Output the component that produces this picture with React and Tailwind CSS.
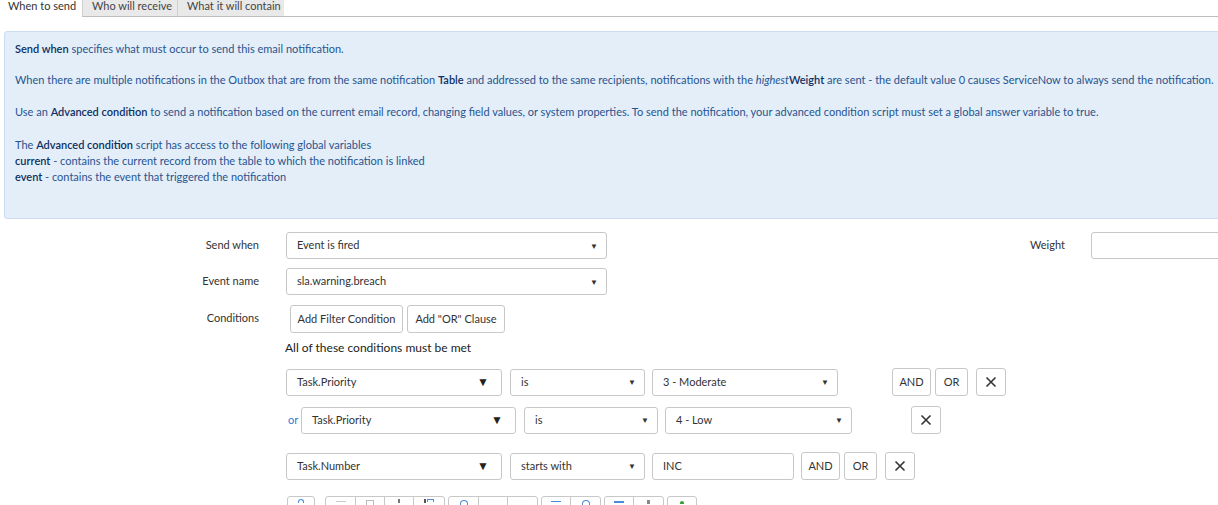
import React from "react";

const font = { fontFamily: '"Source Sans Pro", Lato, "Liberation Sans", sans-serif' };

function Select({ value, className = "", bigArrow = false }) {
  return (
    <div className={`shrink-0 h-[27px] border border-[#c8c8c8] rounded-[3px] bg-white flex items-center justify-between pl-[10px] pr-[8px] text-[11px] text-[#333] ${className}`}>
      <span>{value}</span>
      {bigArrow ? (
        <span className="text-[12px] text-[#222] mr-[4px]">▼</span>
      ) : (
        <span className="text-[8px] text-[#333]">▼</span>
      )}
    </div>
  );
}

function Btn({ children, className = "" }) {
  return (
    <div className={`shrink-0 h-[28px] border border-[#c8c8c8] rounded-[3px] bg-white flex items-center justify-center text-[11px] text-[#333] ${className}`}>
      {children}
    </div>
  );
}

function XBtn({ className = "" }) {
  return (
    <Btn className={`w-[30px] ${className}`}>
      <svg width="12" height="12" viewBox="0 0 12 12">
        <path d="M1.5 1.5 L10.5 10.5 M10.5 1.5 L1.5 10.5" stroke="#333" strokeWidth="1.6" />
      </svg>
    </Btn>
  );
}

export default function App() {
  return (
    <div className="w-[1218px] h-[505px] overflow-hidden bg-white relative" style={font}>
      {/* Tabs */}
      <div className="flex h-[17px] text-[11px] leading-[11px]">
        <div className="w-[82px] pl-[8px] text-[#333] bg-white">When to send</div>
        <div className="w-[95px] pl-[9px] text-[#444] bg-[#e9e9e9] border-l border-[#d0d0d0] border-b border-b-[#bdbdbd]">Who will receive</div>
        <div className="w-[107px] pl-[9px] text-[#444] bg-[#e9e9e9] border-l border-[#d0d0d0] border-b border-b-[#bdbdbd]">What it will contain</div>
        <div className="flex-1 border-b border-[#bdbdbd]"></div>
      </div>

      {/* Info box */}
      <div className="mt-[14px] ml-[4px] w-[1230px] h-[188px] bg-[#e3eef9] border border-[#cbdcef] rounded-[3px] pl-[10px] pt-[9px] text-[11px] leading-[16px] text-[#28548f] whitespace-nowrap">
        <p><b className="font-semibold text-[#0f2f62]">Send when</b> specifies what must occur to send this email notification.</p>
        <p className="mt-[15px]">When there are multiple notifications in the Outbox that are from the same notification <b className="font-semibold text-[#0f2f62]">Table</b> and addressed to the same recipients, notifications with the <i>highest</i><b className="font-semibold text-[#0f2f62]">Weight</b> are sent - the default value 0 causes ServiceNow to always send the notification.</p>
        <p className="mt-[16px]">Use an <b className="font-semibold text-[#0f2f62]">Advanced condition</b> to send a notification based on the current email record, changing field values, or system properties. To send the notification, your advanced condition script must set a global answer variable to true.</p>
        <p className="mt-[17px]">The <b className="font-semibold text-[#0f2f62]">Advanced condition</b> script has access to the following global variables</p>
        <p><b className="font-semibold text-[#0f2f62]">current</b> - contains the current record from the table to which the notification is linked</p>
        <p><b className="font-semibold text-[#0f2f62]">event</b> - contains the event that triggered the notification</p>
      </div>

      {/* Form */}
      <div className="mt-[13px] text-[11px] text-[#333]">
        <div className="flex items-center h-[27px] w-[1400px]">
          <div className="shrink-0 w-[259px] text-right">Send when</div>
          <Select value="Event is fired" className="ml-[27px] w-[321px]" />
          <div className="shrink-0 w-[458px] text-right">Weight</div>
          <div className="shrink-0 ml-[26px] w-[160px] h-[27px] border border-[#c8c8c8] rounded-[3px] bg-white"></div>
        </div>
        <div className="flex items-center h-[27px] mt-[9px]">
          <div className="shrink-0 w-[259px] text-right">Event name</div>
          <Select value="sla.warning.breach" className="ml-[27px] w-[321px]" />
        </div>
        <div className="flex items-start mt-[10px]">
          <div className="shrink-0 w-[259px] text-right pt-[5px]">Conditions</div>
          <div className="ml-[31px] flex gap-[4px]">
            <Btn className="w-[113px]">Add Filter Condition</Btn>
            <Btn className="w-[98px]">Add "OR" Clause</Btn>
          </div>
        </div>

        <div className="ml-[285px] mt-[7px] text-[12px] text-[#222] leading-[16px]">All of these conditions must be met</div>

        {/* Condition rows */}
        <div className="ml-[286px] mt-[12px] flex items-center">
          <Select value="Task.Priority" bigArrow className="w-[216px]" />
          <Select value="is" className="ml-[8px] w-[135px]" />
          <Select value="3 - Moderate" className="ml-[7px] w-[186px]" />
          <Btn className="ml-[54px] w-[39px]">AND</Btn>
          <Btn className="ml-[4px] w-[33px]">OR</Btn>
          <XBtn className="ml-[8px]" />
        </div>
        <div className="ml-[286px] mt-[10px] flex items-center">
          <span className="ml-[2px] w-[13px] text-[#2f7ad8] text-[11px]">or</span>
          <Select value="Task.Priority" bigArrow className="w-[215px]" />
          <Select value="is" className="ml-[8px] w-[134px]" />
          <Select value="4 - Low" className="ml-[7px] w-[187px]" />
          <XBtn className="ml-[59px]" />
        </div>
        <div className="ml-[286px] mt-[18px] flex items-center">
          <Select value="Task.Number" bigArrow className="w-[216px]" />
          <Select value="starts with" className="ml-[8px] w-[135px]" />
          <div className="shrink-0 ml-[7px] w-[142px] h-[27px] border border-[#c8c8c8] rounded-[3px] bg-white flex items-center pl-[10px]">INC</div>
          <Btn className="ml-[7px] w-[39px]">AND</Btn>
          <Btn className="ml-[4px] w-[33px]">OR</Btn>
          <XBtn className="ml-[8px]" />
        </div>

        {/* Partial toolbar */}
        <div className="ml-[287px] mt-[16px] flex gap-[3px] items-start">
          <div className="h-[20px] w-[28px] border border-[#c8c8c8] rounded-[3px] flex justify-center pt-[2px]">
            <div className="w-[6px] h-[4px] rounded-t-full border border-[#4a8ad8] border-b-0"></div>
          </div>
          <div className="ml-[7px] h-[20px] flex border border-[#c8c8c8] rounded-[3px]">
            <div className="w-[30px] border-r border-[#c8c8c8] flex justify-center pt-[4px]"><div className="w-[10px] h-[1px] bg-[#ccc]"></div></div>
            <div className="w-[29px] border-r border-[#c8c8c8] flex justify-center pt-[3px]"><div className="w-[8px] h-[6px] border border-[#bbb]"></div></div>
            <div className="w-[29px] border-r border-[#c8c8c8] flex justify-center pt-[2px]"><div className="w-[2px] h-[4px] bg-[#777]"></div></div>
            <div className="w-[30px] flex justify-center gap-[1px] pt-[2px]"><div className="w-[2px] h-[4px] bg-[#555]"></div><div className="w-[7px] h-[3px] border border-[#4a8ad8] border-b-0"></div></div>
          </div>
          <div className="h-[20px] flex border border-[#c8c8c8] rounded-[3px]">
            <div className="w-[30px] border-r border-[#c8c8c8] flex justify-center pt-[3px]"><div className="w-[8px] h-[6px] rounded-t-full border border-[#4a8ad8] border-b-0"></div></div>
            <div className="w-[29px] border-r border-[#c8c8c8]"></div>
            <div className="w-[29px]"></div>
          </div>
          <div className="h-[20px] flex border border-[#c8c8c8] rounded-[3px]">
            <div className="w-[29px] border-r border-[#c8c8c8] flex justify-center pt-[4px]"><div className="w-[10px] h-[1px] bg-[#4a8ad8]"></div></div>
            <div className="w-[29px] flex justify-center pt-[3px]"><div className="w-[8px] h-[6px] rounded-t-full border border-[#4a8ad8] border-b-0"></div></div>
          </div>
          <div className="h-[20px] flex border border-[#c8c8c8] rounded-[3px]">
            <div className="w-[29px] border-r border-[#c8c8c8] flex justify-center pt-[4px]"><div className="w-[10px] h-[2px] bg-[#4a8ad8]"></div></div>
            <div className="w-[29px] flex justify-center pt-[3px]"><div className="w-[3px] h-[4px] bg-[#888]"></div></div>
          </div>
          <div className="h-[20px] w-[30px] border border-[#c8c8c8] rounded-[3px] flex justify-center pt-[4px]">
            <div className="w-[4px] h-[3px] rounded-t-full bg-[#3aa03a]"></div>
          </div>
        </div>
      </div>
    </div>
  );
}
